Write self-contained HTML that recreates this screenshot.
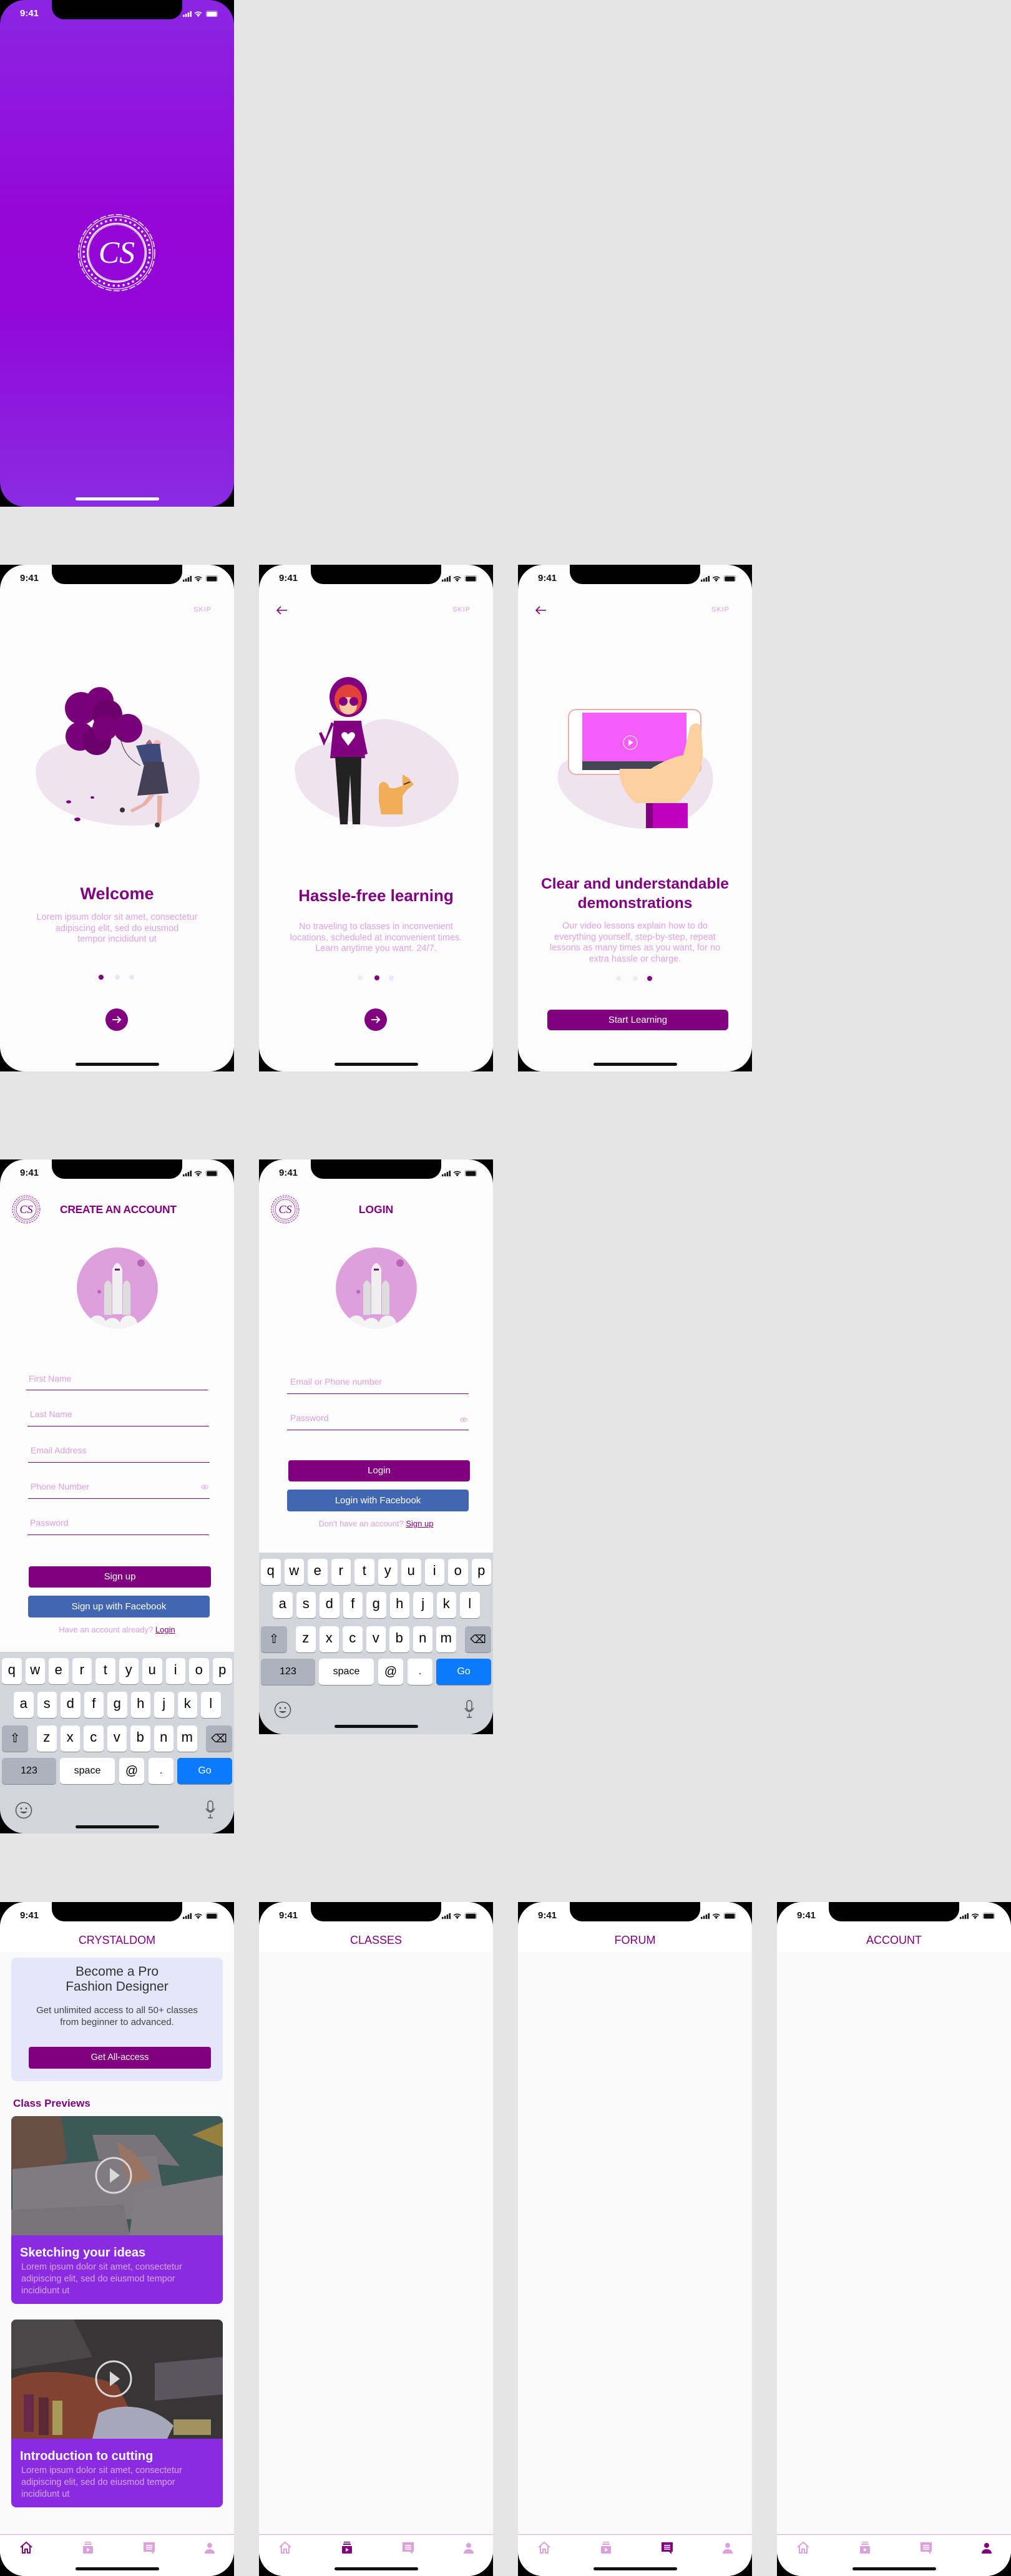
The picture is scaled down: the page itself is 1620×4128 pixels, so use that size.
<!DOCTYPE html>
<html><head><meta charset="utf-8">
<style>
*{margin:0;padding:0;box-sizing:border-box}
body{width:1620px;height:4128px;background:#e5e5e5;position:relative;overflow:hidden;font-family:"Liberation Sans",sans-serif}
.ph{position:absolute;width:375px;background:#000}
.scr{position:absolute;inset:0;border-radius:40px;overflow:hidden;background:#fcfcfc}
.notch{position:absolute;left:83px;top:0;width:209px;height:31px;background:#000;border-radius:0 0 20px 20px}
.time{position:absolute;left:22px;top:13px;width:50px;text-align:center;font-size:15px;font-weight:bold;color:#111}
.sb{position:absolute;left:293px;top:17px;transform:scale(.85);transform-origin:left top}
.abs{position:absolute}
.c{position:absolute;left:0;width:375px;text-align:center}
.hi{position:absolute;left:121px;width:134px;height:5px;border-radius:3px;background:#111}
.obt{font-weight:bold;color:#800080}
.obd{font-size:14.5px;line-height:17.5px;color:#e0a3e3}
.dot{position:absolute;width:8px;height:8px;border-radius:50%;background:#e8e6f8}
.dot.on{background:#800080}
.lbl{position:absolute;font-size:14px;color:#dd9fdd}
.line{position:absolute;height:1px;background:#800080}
.btn{position:absolute;border-radius:4px;color:#fff;font-size:15px;text-align:center}
.kb{position:absolute;left:0;width:375px;background:#d2d5db}
.row{position:absolute;display:flex;gap:6px}
.k{width:31.5px;height:42px;background:#fff;border-radius:5px;box-shadow:0 1px 0 #898a8d;font-size:22px;text-align:center;line-height:38px;color:#000}
.ka{position:absolute;height:42px;border-radius:5px;box-shadow:0 1px 0 #898a8d;text-align:center;line-height:42px;font-size:16px}
.hdr{position:absolute;left:0;top:0;width:375px;height:80px;background:#fff}
.ht{position:absolute;left:0;top:51px;width:375px;text-align:center;font-size:18px;color:#800080}
.tab{position:absolute;left:0;top:1013px;width:375px;height:67px;background:#fff;border-top:1px solid #dda0dd}
.ti{position:absolute;top:9px}
</style></head><body>

<!-- SPLASH -->
<div class="ph" style="left:0;top:0;height:812px">
<div class="scr" style="background:linear-gradient(#8b25e3,#9505d6 45%,#9206d8 60%,#8a2be2)">
<div class="notch"></div>
<div class="time" style="color:#fff">9:41</div>
<svg class="sb" width="66" height="12"><g fill="#fff"><rect x="0" y="8" width="3" height="4"/><rect x="4.5" y="6" width="3" height="6"/><rect x="9" y="3.5" width="3" height="8.5"/><rect x="13.5" y="1" width="3" height="11"/><path d="M29 12l-2.5-3a4 4 0 0 1 5 0zM24.5 7a7 7 0 0 1 9 0l-1.3 1.4a5 5 0 0 0-6.4 0zM22 4.5a10.5 10.5 0 0 1 14 0l-1.3 1.4a8.5 8.5 0 0 0-11.4 0z"/><rect x="45" y="2" width="19" height="9" rx="2"/></g><rect x="43.5" y="0.5" width="22" height="11" rx="3" fill="none" stroke="#fff" opacity=".5"/></svg>
<svg class="abs" style="left:123px;top:341px" width="128" height="128" viewBox="-64 -64 128 128">
<g fill="none" stroke="#fff"><circle r="61" stroke-width="1.5" stroke-dasharray="10 3"/><circle r="58" stroke-width="1.2"/><circle r="53" stroke-width="3.5" stroke-dasharray="0 8" stroke-linecap="round"/><circle r="47" stroke-width="2"/><circle r="45" stroke-width="1"/></g>
<text x="0" y="16" text-anchor="middle" font-family="Liberation Serif,serif" font-style="italic" font-size="50" fill="#fff">CS</text></svg>
<div class="hi" style="top:797px;background:#fff"></div>
</div></div>

<!-- ONBOARDING 1 -->
<div class="ph" style="left:0;top:905px;height:812px"><div class="scr">
<div class="notch"></div><div class="time">9:41</div>
<svg class="sb" width="66" height="12"><g fill="#111"><rect x="0" y="8" width="3" height="4"/><rect x="4.5" y="6" width="3" height="6"/><rect x="9" y="3.5" width="3" height="8.5"/><rect x="13.5" y="1" width="3" height="11"/><path d="M29 12l-2.5-3a4 4 0 0 1 5 0zM24.5 7a7 7 0 0 1 9 0l-1.3 1.4a5 5 0 0 0-6.4 0zM22 4.5a10.5 10.5 0 0 1 14 0l-1.3 1.4a8.5 8.5 0 0 0-11.4 0z"/><rect x="45" y="2" width="19" height="9" rx="2"/></g><rect x="43.5" y="0.5" width="22" height="11" rx="3" fill="none" stroke="#111" opacity=".4"/></svg>
<div class="abs" style="left:310px;top:66px;font-size:11px;color:#dda0dd;letter-spacing:1px">SKIP</div>
<svg class="abs" style="left:0;top:0" width="375" height="440">
<path d="M58 340C52 300 90 290 120 282C160 270 175 245 215 252C270 262 322 300 320 345C318 395 265 420 210 418C150 418 64 395 58 340Z" fill="#efe3f0"/>
<g fill="#7a0079"><circle cx="130" cy="230" r="26"/><circle cx="160" cy="218" r="22"/><circle cx="172" cy="240" r="24" fill="#6b006b"/><circle cx="205" cy="262" r="23"/><circle cx="128" cy="275" r="23"/><circle cx="155" cy="282" r="23" fill="#6b006b"/><circle cx="168" cy="262" r="20"/></g>
<path d="M192 275C198 300 205 310 225 322" stroke="#333" fill="none"/>
<path d="M240 280c-8 5-10 15-6 25l8 4 10-10z" fill="#a06a7a"/><circle cx="252" cy="287" r="6" fill="#f0b8b0"/>
<path d="M218 290l22 -3 16 0 4 30-30 4z" fill="#3f4a7a"/>
<path d="M232 316l30 0 8 50-50 4z" fill="#444055"/>
<path d="M240 368l-12 15-20 10 4 4 22-12 14-16z" fill="#e8b0a8"/><path d="M252 370l0 45 6 0 2-45z" fill="#e8b0a8"/>
<circle cx="252" cy="417" r="4" fill="#333"/><circle cx="196" cy="393" r="4" fill="#333"/>
<ellipse cx="110" cy="380" rx="4" ry="2.5" fill="#800080"/><ellipse cx="148" cy="373" rx="3" ry="2" fill="#800080"/><ellipse cx="124" cy="408" rx="5" ry="3" fill="#800080"/>
</svg>
<div class="c obt" style="top:512px;font-size:27px">Welcome</div>
<div class="c obd" style="top:557px">Lorem ipsum dolor sit amet, consectetur<br>adipiscing elit, sed do eiusmod<br>tempor incididunt ut</div>
<div class="dot on" style="left:158px;top:657px"></div><div class="dot" style="left:184px;top:657px"></div><div class="dot" style="left:207px;top:657px"></div>
<svg class="abs" style="left:169px;top:711px" width="36" height="36"><circle cx="18" cy="18" r="18" fill="#800080"/><path d="M11 18h13M19 13l5 5-5 5" stroke="#fff" stroke-width="2" fill="none"/></svg>
<div class="hi" style="top:798px"></div>
</div></div>

<!-- ONBOARDING 2 -->
<div class="ph" style="left:415px;top:905px;height:812px"><div class="scr">
<div class="notch"></div><div class="time">9:41</div>
<svg class="sb" width="66" height="12"><g fill="#111"><rect x="0" y="8" width="3" height="4"/><rect x="4.5" y="6" width="3" height="6"/><rect x="9" y="3.5" width="3" height="8.5"/><rect x="13.5" y="1" width="3" height="11"/><path d="M29 12l-2.5-3a4 4 0 0 1 5 0zM24.5 7a7 7 0 0 1 9 0l-1.3 1.4a5 5 0 0 0-6.4 0zM22 4.5a10.5 10.5 0 0 1 14 0l-1.3 1.4a8.5 8.5 0 0 0-11.4 0z"/><rect x="45" y="2" width="19" height="9" rx="2"/></g><rect x="43.5" y="0.5" width="22" height="11" rx="3" fill="none" stroke="#111" opacity=".4"/></svg>
<svg class="abs" style="left:28px;top:66px" width="18" height="14"><path d="M17 7H2M7 1L1 7l6 6" stroke="#800080" stroke-width="1.6" fill="none"/></svg>
<div class="abs" style="left:310px;top:66px;font-size:11px;color:#dda0dd;letter-spacing:1px">SKIP</div>
<svg class="abs" style="left:0;top:0" width="375" height="440">
<path d="M58 335C52 300 90 292 120 282C160 270 172 243 210 248C270 256 322 305 320 345C318 395 265 420 210 420C150 420 64 395 58 335Z" fill="#efe3f0"/>
<ellipse cx="143" cy="212" rx="30" ry="32" fill="#800080"/><ellipse cx="143" cy="216" rx="22" ry="24" fill="#e3403a"/>
<circle cx="143" cy="226" r="14" fill="#f6c7a0"/><circle cx="135" cy="219" r="7" fill="#800080"/><circle cx="152" cy="219" r="7" fill="#800080"/>
<path d="M120 250h44l6 60h-56z" fill="#800080"/><path d="M120 255l-16 35-8-20 4-2 6 12 10-28z" fill="#800080"/><path d="M164 255l10 48-7 2-8-40z" fill="#800080"/>
<path d="M134 278c-6-8 4-14 9-6 5-8 15-2 9 6l-9 12z" fill="#fff"/>
<path d="M122 308h42l-2 108h-12l-4-80-4 80h-12z" fill="#222"/>
<path d="M192 358c0-14 14-12 16-2 4 4 12 2 22-2l0-18 10 6 8 10-10 8-8 10 0 30h-34l-4-20z" fill="#f2ad58"/>
<path d="M232 352l10-4" stroke="#333" stroke-width="2"/>
</svg>
<div class="c obt" style="top:515px;font-size:26px">Hassle-free learning</div>
<div class="c obd" style="top:572px">No traveling to classes in inconvenient<br>locations, scheduled at inconvenient times.<br>Learn anytime you want. 24/7.</div>
<div class="dot" style="left:158px;top:658px;background:#eee"></div><div class="dot on" style="left:185px;top:658px"></div><div class="dot" style="left:208px;top:658px"></div>
<svg class="abs" style="left:169px;top:711px" width="36" height="36"><circle cx="18" cy="18" r="18" fill="#800080"/><path d="M11 18h13M19 13l5 5-5 5" stroke="#fff" stroke-width="2" fill="none"/></svg>
<div class="hi" style="top:798px"></div>
</div></div>

<!-- ONBOARDING 3 -->
<div class="ph" style="left:830px;top:905px;height:812px"><div class="scr">
<div class="notch"></div><div class="time">9:41</div>
<svg class="sb" width="66" height="12"><g fill="#111"><rect x="0" y="8" width="3" height="4"/><rect x="4.5" y="6" width="3" height="6"/><rect x="9" y="3.5" width="3" height="8.5"/><rect x="13.5" y="1" width="3" height="11"/><path d="M29 12l-2.5-3a4 4 0 0 1 5 0zM24.5 7a7 7 0 0 1 9 0l-1.3 1.4a5 5 0 0 0-6.4 0zM22 4.5a10.5 10.5 0 0 1 14 0l-1.3 1.4a8.5 8.5 0 0 0-11.4 0z"/><rect x="45" y="2" width="19" height="9" rx="2"/></g><rect x="43.5" y="0.5" width="22" height="11" rx="3" fill="none" stroke="#111" opacity=".4"/></svg>
<svg class="abs" style="left:28px;top:66px" width="18" height="14"><path d="M17 7H2M7 1L1 7l6 6" stroke="#800080" stroke-width="1.6" fill="none"/></svg>
<div class="abs" style="left:310px;top:66px;font-size:11px;color:#dda0dd;letter-spacing:1px">SKIP</div>
<svg class="abs" style="left:0;top:0" width="375" height="440">
<path d="M64 345C60 310 90 305 140 305L290 305C312 310 316 340 310 360C300 395 260 420 210 423C150 425 70 390 64 345Z" fill="#efe3f0"/>
<rect x="81" y="232" width="212" height="104" rx="12" fill="#fff" stroke="#eab0a8" stroke-width="2"/>
<rect x="103" y="237" width="167" height="78" fill="#f55cf9"/><rect x="103" y="315" width="167" height="14" fill="#414853"/>
<circle cx="180" cy="285" r="11" fill="none" stroke="#fff"/><path d="M177 280l8 5-8 5z" fill="#fff"/>
<path d="M163 327c-3 20 10 42 25 55h68c20-20 42-50 40-85l-3-38c-4-8-16-6-18 4l-10 42c-20 4-40 14-52 22z" fill="#fdd0a2"/>
<rect x="205" y="382" width="67" height="40" fill="#c000c0"/><rect x="205" y="382" width="11" height="40" fill="#800080"/>
</svg>
<div class="c obt" style="top:496px;font-size:24.5px;line-height:31px">Clear and understandable<br>demonstrations</div>
<div class="c obd" style="top:571px">Our video lessons explain how to do<br>everything yourself, step-by-step, repeat<br>lessons as many times as you want, for no<br>extra hassle or charge.</div>
<div class="dot" style="left:157px;top:659px;background:#eee"></div><div class="dot" style="left:184px;top:659px;background:#eee"></div><div class="dot on" style="left:207px;top:659px"></div>
<div class="btn" style="left:47px;top:713px;width:290px;height:33px;line-height:33px;background:#800080;border-radius:6px">Start Learning</div>
<div class="hi" style="top:798px"></div>
</div></div>

<!-- SIGNUP -->
<div class="ph" style="left:0;top:1858px;height:1080px"><div class="scr">
<div class="notch"></div><div class="time">9:41</div>
<svg class="sb" width="66" height="12"><g fill="#111"><rect x="0" y="8" width="3" height="4"/><rect x="4.5" y="6" width="3" height="6"/><rect x="9" y="3.5" width="3" height="8.5"/><rect x="13.5" y="1" width="3" height="11"/><path d="M29 12l-2.5-3a4 4 0 0 1 5 0zM24.5 7a7 7 0 0 1 9 0l-1.3 1.4a5 5 0 0 0-6.4 0zM22 4.5a10.5 10.5 0 0 1 14 0l-1.3 1.4a8.5 8.5 0 0 0-11.4 0z"/><rect x="45" y="2" width="19" height="9" rx="2"/></g><rect x="43.5" y="0.5" width="22" height="11" rx="3" fill="none" stroke="#111" opacity=".4"/></svg>
<svg class="abs" style="left:19px;top:57px" width="46" height="46" viewBox="-23 -23 46 46"><g fill="none" stroke="#a020a0"><circle r="22" stroke-width="1" stroke-dasharray="3 1.5"/><circle r="19" stroke-width="1.5" stroke-dasharray="0 3" stroke-linecap="round"/><circle r="16" stroke-width=".8"/></g><text x="0" y="6" text-anchor="middle" font-family="Liberation Serif,serif" font-style="italic" font-size="18" fill="#800080">CS</text></svg>
<div class="abs" style="left:96px;top:70px;font-size:17.5px;font-weight:bold;color:#800080;letter-spacing:-.3px">CREATE AN ACCOUNT</div>
<svg class="abs" style="left:120px;top:138px" width="136" height="136" viewBox="-68 -68 136 136"><defs><clipPath id="cc1"><circle r="65"/></clipPath></defs><g clip-path="url(#cc1)"><circle r="65" fill="#dda0dd"/><circle cx="38" cy="-40" r="6" fill="#b866b8"/><circle cx="-29" cy="6" r="3" fill="#b866b8"/><path d="M-8 -30q8-20 16 0v72h-16z" fill="#efefef"/><path d="M-21 -5q6-14 12 0v48h-12z" fill="#ddd"/><path d="M9 -5q6-14 12 0v48h-12z" fill="#ddd"/><rect x="-4" y="-31" width="8" height="3" fill="#800080"/><circle cx="-32" cy="58" r="14" fill="#f4f4f4"/><circle cx="-8" cy="62" r="14" fill="#f4f4f4"/><circle cx="18" cy="58" r="14" fill="#f4f4f4"/><circle cx="40" cy="66" r="12" fill="#f4f4f4"/></g></svg>
<div class="lbl" style="left:46px;top:343px">First Name</div><div class="line" style="left:42px;top:369px;width:291px"></div>
<div class="lbl" style="left:48px;top:400px">Last Name</div><div class="line" style="left:44px;top:427px;width:291px"></div>
<div class="lbl" style="left:49px;top:458px">Email Address</div><div class="line" style="left:45px;top:485px;width:291px"></div>
<div class="lbl" style="left:49px;top:516px">Phone Number</div><div class="line" style="left:45px;top:543px;width:291px"></div>
<svg class="abs" style="left:322px;top:521px" width="12" height="8"><ellipse cx="6" cy="4" rx="5" ry="3" fill="none" stroke="#dda0dd"/><circle cx="6" cy="4" r="1.5" fill="#dda0dd"/></svg>
<div class="lbl" style="left:48px;top:574px">Password</div><div class="line" style="left:44px;top:601px;width:291px"></div>
<div class="btn" style="left:46px;top:652px;width:292px;height:34px;line-height:34px;background:#800080">Sign up</div>
<div class="btn" style="left:45px;top:699px;width:291px;height:35px;line-height:35px;background:#4267b2">Sign up with Facebook</div>
<div class="c" style="top:746px;font-size:13px;color:#dd9fdd">Have an account already? <u style="color:#800080">Login</u></div>
<div class="kb" style="top:789px;height:291px">
<div class="row" style="left:3px;top:10px"><div class="k">q</div><div class="k">w</div><div class="k">e</div><div class="k">r</div><div class="k">t</div><div class="k">y</div><div class="k">u</div><div class="k">i</div><div class="k">o</div><div class="k">p</div></div>
<div class="row" style="left:22px;top:64px"><div class="k">a</div><div class="k">s</div><div class="k">d</div><div class="k">f</div><div class="k">g</div><div class="k">h</div><div class="k">j</div><div class="k">k</div><div class="k">l</div></div>
<div class="ka" style="left:3px;top:118px;width:42px;background:#adb3bc;font-size:20px">⇧</div>
<div class="row" style="left:59px;top:118px"><div class="k">z</div><div class="k">x</div><div class="k">c</div><div class="k">v</div><div class="k">b</div><div class="k">n</div><div class="k">m</div></div>
<div class="ka" style="left:330px;top:118px;width:42px;background:#adb3bc;font-size:18px">⌫</div>
<div class="ka" style="left:3px;top:170px;width:87px;background:#adb3bc">123</div>
<div class="ka" style="left:96px;top:170px;width:88px;background:#fff">space</div>
<div class="ka" style="left:191px;top:170px;width:40px;background:#fff;font-size:20px">@</div>
<div class="ka" style="left:238px;top:170px;width:40px;background:#fff">.</div>
<div class="ka" style="left:284px;top:170px;width:88px;background:#0a7aff;color:#fff">Go</div>
<svg class="abs" style="left:24px;top:240px" width="28" height="28"><circle cx="14" cy="14" r="12.5" fill="none" stroke="#555" stroke-width="1.5"/><circle cx="10" cy="11" r="1.5" fill="#555"/><circle cx="18" cy="11" r="1.5" fill="#555"/><path d="M8 16q6 6 12 0z" fill="#555"/></svg>
<svg class="abs" style="left:328px;top:238px" width="18" height="30"><rect x="5" y="1" width="8" height="16" rx="4" fill="none" stroke="#555" stroke-width="1.5"/><path d="M2 13q7 12 14 0M9 22v6M5 28h8" stroke="#555" stroke-width="1.5" fill="none"/></svg>
</div>
<div class="hi" style="top:1067px"></div>
</div></div>

<!-- LOGIN -->
<div class="ph" style="left:415px;top:1858px;height:921px"><div class="scr">
<div class="notch"></div><div class="time">9:41</div>
<svg class="sb" width="66" height="12"><g fill="#111"><rect x="0" y="8" width="3" height="4"/><rect x="4.5" y="6" width="3" height="6"/><rect x="9" y="3.5" width="3" height="8.5"/><rect x="13.5" y="1" width="3" height="11"/><path d="M29 12l-2.5-3a4 4 0 0 1 5 0zM24.5 7a7 7 0 0 1 9 0l-1.3 1.4a5 5 0 0 0-6.4 0zM22 4.5a10.5 10.5 0 0 1 14 0l-1.3 1.4a8.5 8.5 0 0 0-11.4 0z"/><rect x="45" y="2" width="19" height="9" rx="2"/></g><rect x="43.5" y="0.5" width="22" height="11" rx="3" fill="none" stroke="#111" opacity=".4"/></svg>
<svg class="abs" style="left:19px;top:57px" width="46" height="46" viewBox="-23 -23 46 46"><g fill="none" stroke="#a020a0"><circle r="22" stroke-width="1" stroke-dasharray="3 1.5"/><circle r="19" stroke-width="1.5" stroke-dasharray="0 3" stroke-linecap="round"/><circle r="16" stroke-width=".8"/></g><text x="0" y="6" text-anchor="middle" font-family="Liberation Serif,serif" font-style="italic" font-size="18" fill="#800080">CS</text></svg>
<div class="c" style="top:70px;font-size:17.5px;font-weight:bold;color:#800080">LOGIN</div>
<svg class="abs" style="left:120px;top:138px" width="136" height="136" viewBox="-68 -68 136 136"><defs><clipPath id="cc2"><circle r="65"/></clipPath></defs><g clip-path="url(#cc2)"><circle r="65" fill="#dda0dd"/><circle cx="38" cy="-40" r="6" fill="#b866b8"/><circle cx="-29" cy="6" r="3" fill="#b866b8"/><path d="M-8 -30q8-20 16 0v72h-16z" fill="#efefef"/><path d="M-21 -5q6-14 12 0v48h-12z" fill="#ddd"/><path d="M9 -5q6-14 12 0v48h-12z" fill="#ddd"/><rect x="-4" y="-31" width="8" height="3" fill="#800080"/><circle cx="-32" cy="58" r="14" fill="#f4f4f4"/><circle cx="-8" cy="62" r="14" fill="#f4f4f4"/><circle cx="18" cy="58" r="14" fill="#f4f4f4"/><circle cx="40" cy="66" r="12" fill="#f4f4f4"/></g></svg>
<div class="lbl" style="left:50px;top:348px">Email or Phone number</div><div class="line" style="left:45px;top:375px;width:291px"></div>
<div class="lbl" style="left:50px;top:406px">Password</div><div class="line" style="left:45px;top:433px;width:291px"></div>
<svg class="abs" style="left:322px;top:413px" width="12" height="8"><ellipse cx="6" cy="4" rx="5" ry="3" fill="none" stroke="#dda0dd"/><circle cx="6" cy="4" r="1.5" fill="#dda0dd"/></svg>
<div class="btn" style="left:47px;top:482px;width:291px;height:34px;line-height:34px;background:#800080">Login</div>
<div class="btn" style="left:45px;top:529px;width:291px;height:35px;line-height:35px;background:#4267b2">Login with Facebook</div>
<div class="c" style="top:576px;font-size:13px;color:#dd9fdd">Don't have an account? <u style="color:#800080">Sign up</u></div>
<div class="kb" style="top:630px;height:291px">
<div class="row" style="left:3px;top:10px"><div class="k">q</div><div class="k">w</div><div class="k">e</div><div class="k">r</div><div class="k">t</div><div class="k">y</div><div class="k">u</div><div class="k">i</div><div class="k">o</div><div class="k">p</div></div>
<div class="row" style="left:22px;top:63px"><div class="k">a</div><div class="k">s</div><div class="k">d</div><div class="k">f</div><div class="k">g</div><div class="k">h</div><div class="k">j</div><div class="k">k</div><div class="k">l</div></div>
<div class="ka" style="left:3px;top:118px;width:42px;background:#adb3bc;font-size:20px">⇧</div>
<div class="row" style="left:59px;top:118px"><div class="k">z</div><div class="k">x</div><div class="k">c</div><div class="k">v</div><div class="k">b</div><div class="k">n</div><div class="k">m</div></div>
<div class="ka" style="left:330px;top:118px;width:42px;background:#adb3bc;font-size:18px">⌫</div>
<div class="ka" style="left:3px;top:170px;width:87px;background:#adb3bc">123</div>
<div class="ka" style="left:96px;top:170px;width:88px;background:#fff">space</div>
<div class="ka" style="left:191px;top:170px;width:40px;background:#fff;font-size:20px">@</div>
<div class="ka" style="left:238px;top:170px;width:40px;background:#fff">.</div>
<div class="ka" style="left:284px;top:170px;width:88px;background:#0a7aff;color:#fff">Go</div>
<svg class="abs" style="left:24px;top:238px" width="28" height="28"><circle cx="14" cy="14" r="12.5" fill="none" stroke="#555" stroke-width="1.5"/><circle cx="10" cy="11" r="1.5" fill="#555"/><circle cx="18" cy="11" r="1.5" fill="#555"/><path d="M8 16q6 6 12 0z" fill="#555"/></svg>
<svg class="abs" style="left:328px;top:236px" width="18" height="30"><rect x="5" y="1" width="8" height="16" rx="4" fill="none" stroke="#555" stroke-width="1.5"/><path d="M2 13q7 12 14 0M9 22v6M5 28h8" stroke="#555" stroke-width="1.5" fill="none"/></svg>
</div>
<div class="hi" style="top:906px"></div>
</div></div>

<!-- HOME -->
<div class="ph" style="left:0;top:3048px;height:1080px"><div class="scr" style="background:#fafafa">
<div class="hdr"></div>
<div class="notch"></div><div class="time">9:41</div>
<svg class="sb" width="66" height="12"><g fill="#111"><rect x="0" y="8" width="3" height="4"/><rect x="4.5" y="6" width="3" height="6"/><rect x="9" y="3.5" width="3" height="8.5"/><rect x="13.5" y="1" width="3" height="11"/><path d="M29 12l-2.5-3a4 4 0 0 1 5 0zM24.5 7a7 7 0 0 1 9 0l-1.3 1.4a5 5 0 0 0-6.4 0zM22 4.5a10.5 10.5 0 0 1 14 0l-1.3 1.4a8.5 8.5 0 0 0-11.4 0z"/><rect x="45" y="2" width="19" height="9" rx="2"/></g><rect x="43.5" y="0.5" width="22" height="11" rx="3" fill="none" stroke="#111" opacity=".4"/></svg>
<div class="ht">CRYSTALDOM</div>
<div class="abs" style="left:18px;top:89px;width:339px;height:198px;background:#e6e6fa;border-radius:8px"></div>
<div class="c" style="top:100px;font-size:21px;line-height:24px;color:#333">Become a Pro<br>Fashion Designer</div>
<div class="c" style="top:165px;font-size:15px;line-height:18.5px;color:#444">Get unlimited access to all 50+ classes<br>from beginner to advanced.</div>
<div class="btn" style="left:46px;top:232px;width:292px;height:35px;line-height:35px;background:#800080;font-size:14.5px">Get All-access</div>
<div class="abs" style="left:21px;top:313px;font-size:17px;font-weight:bold;color:#800080">Class Previews</div>
<div class="abs" style="left:18px;top:343px;width:339px;height:301px;border-radius:8px;overflow:hidden;background:#8a2be2">
<svg width="339" height="191" style="display:block"><rect width="339" height="191" fill="#3f6664"/><path d="M0 0h80l10 70-60 30-30-5z" fill="#7a5a4e"/><path d="M130 30l100 0 40 50-130-10z" fill="#8f8a90"/><path d="M2 85l230-22 20 100-250 8z" fill="#99939a"/><path d="M200 120l139-25v96h-150z" fill="#9c969d"/><path d="M0 150l180-8 10 49h-190z" fill="#8e8990"/><path d="M168 40l30 20 30 40-40 10z" fill="#b88a74"/><path d="M290 30l49-20v40z" fill="#b89a40"/><rect width="339" height="191" fill="#333" opacity=".25"/><circle cx="164" cy="95" r="28" fill="none" stroke="#d8d8d8" stroke-width="3"/><path d="M158 83l16 12-16 12z" fill="#d8d8d8"/></svg>
<div class="abs" style="left:14px;top:208px;font-size:20px;font-weight:bold;color:#fff">Sketching your ideas</div>
<div class="abs" style="left:16px;top:233px;font-size:14.5px;line-height:19px;color:#d5a6f2">Lorem ipsum dolor sit amet, consectetur<br>adipiscing elit, sed do eiusmod tempor<br>incididunt ut</div>
</div>
<div class="abs" style="left:18px;top:669px;width:339px;height:301px;border-radius:8px;overflow:hidden;background:#8a2be2">
<svg width="339" height="191" style="display:block"><rect width="339" height="191" fill="#3e3a3c"/><path d="M0 0h100l30 60-130 20z" fill="#555052"/><path d="M0 95c40-20 120-10 170 10l30 60-40 26h-160z" fill="#9a4a34"/><path d="M230 70l109-10v60l-109 10z" fill="#6a6270"/><path d="M140 150c40-20 90-10 120 20l-10 21h-120z" fill="#c8c8e0"/><rect x="20" y="120" width="16" height="60" fill="#7a2a50"/><rect x="44" y="125" width="16" height="60" fill="#6a2a3a"/><rect x="66" y="130" width="16" height="55" fill="#c8b868"/><rect x="260" y="160" width="60" height="25" fill="#c0b070"/><rect width="339" height="191" fill="#222" opacity=".2"/><circle cx="164" cy="95" r="28" fill="none" stroke="#d8d8d8" stroke-width="3"/><path d="M158 83l16 12-16 12z" fill="#d8d8d8"/></svg>
<div class="abs" style="left:14px;top:208px;font-size:20px;font-weight:bold;color:#fff">Introduction to cutting</div>
<div class="abs" style="left:16px;top:233px;font-size:14.5px;line-height:19px;color:#d5a6f2">Lorem ipsum dolor sit amet, consectetur<br>adipiscing elit, sed do eiusmod tempor<br>incididunt ut</div>
</div>
<div class="tab">
<svg class="ti" style="left:30px" width="24" height="24"><path d="M3 11L12 3l9 8M6 9v11h4v-6h4v6h4V9" stroke="#800080" stroke-width="2" fill="none"/></svg>
<svg class="ti" style="left:129px" width="24" height="24"><rect x="7" y="2" width="10" height="1.5" fill="#dda0dd"/><rect x="6" y="5" width="12" height="2" fill="#dda0dd"/><rect x="4" y="9" width="16" height="12" rx="1.5" fill="#dda0dd"/><path d="M10 12l5 3-5 3z" fill="#fff"/></svg>
<svg class="ti" style="left:227px" width="24" height="24"><path d="M3 3h18v15h-2v4l-4-4H3z" fill="#dda0dd"/><path d="M7 8h10M7 11h10M7 14h10" stroke="#fff" stroke-width="1.4"/></svg>
<svg class="ti" style="left:324px" width="24" height="24"><circle cx="12" cy="8" r="4" fill="#dda0dd"/><path d="M4 21c0-5 4-7 8-7s8 2 8 7z" fill="#dda0dd"/></svg>
</div>
<div class="hi" style="top:1066px"></div>
</div></div>

<!-- CLASSES -->
<div class="ph" style="left:415px;top:3048px;height:1080px"><div class="scr" style="background:#fafafa">
<div class="hdr"></div><div class="notch"></div><div class="time">9:41</div>
<svg class="sb" width="66" height="12"><g fill="#111"><rect x="0" y="8" width="3" height="4"/><rect x="4.5" y="6" width="3" height="6"/><rect x="9" y="3.5" width="3" height="8.5"/><rect x="13.5" y="1" width="3" height="11"/><path d="M29 12l-2.5-3a4 4 0 0 1 5 0zM24.5 7a7 7 0 0 1 9 0l-1.3 1.4a5 5 0 0 0-6.4 0zM22 4.5a10.5 10.5 0 0 1 14 0l-1.3 1.4a8.5 8.5 0 0 0-11.4 0z"/><rect x="45" y="2" width="19" height="9" rx="2"/></g><rect x="43.5" y="0.5" width="22" height="11" rx="3" fill="none" stroke="#111" opacity=".4"/></svg>
<div class="ht">CLASSES</div>
<div class="tab">
<svg class="ti" style="left:30px" width="24" height="24"><path d="M3 11L12 3l9 8M6 9v11h4v-6h4v6h4V9" stroke="#dda0dd" stroke-width="2" fill="none"/></svg>
<svg class="ti" style="left:129px" width="24" height="24"><rect x="7" y="2" width="10" height="1.5" fill="#800080"/><rect x="6" y="5" width="12" height="2" fill="#800080"/><rect x="4" y="9" width="16" height="12" rx="1.5" fill="#800080"/><path d="M10 12l5 3-5 3z" fill="#fff"/></svg>
<svg class="ti" style="left:227px" width="24" height="24"><path d="M3 3h18v15h-2v4l-4-4H3z" fill="#dda0dd"/><path d="M7 8h10M7 11h10M7 14h10" stroke="#fff" stroke-width="1.4"/></svg>
<svg class="ti" style="left:324px" width="24" height="24"><circle cx="12" cy="8" r="4" fill="#dda0dd"/><path d="M4 21c0-5 4-7 8-7s8 2 8 7z" fill="#dda0dd"/></svg>
</div>
<div class="hi" style="top:1066px"></div>
</div></div>

<!-- FORUM -->
<div class="ph" style="left:830px;top:3048px;height:1080px"><div class="scr" style="background:#fafafa">
<div class="hdr"></div><div class="notch"></div><div class="time">9:41</div>
<svg class="sb" width="66" height="12"><g fill="#111"><rect x="0" y="8" width="3" height="4"/><rect x="4.5" y="6" width="3" height="6"/><rect x="9" y="3.5" width="3" height="8.5"/><rect x="13.5" y="1" width="3" height="11"/><path d="M29 12l-2.5-3a4 4 0 0 1 5 0zM24.5 7a7 7 0 0 1 9 0l-1.3 1.4a5 5 0 0 0-6.4 0zM22 4.5a10.5 10.5 0 0 1 14 0l-1.3 1.4a8.5 8.5 0 0 0-11.4 0z"/><rect x="45" y="2" width="19" height="9" rx="2"/></g><rect x="43.5" y="0.5" width="22" height="11" rx="3" fill="none" stroke="#111" opacity=".4"/></svg>
<div class="ht">FORUM</div>
<div class="tab">
<svg class="ti" style="left:30px" width="24" height="24"><path d="M3 11L12 3l9 8M6 9v11h4v-6h4v6h4V9" stroke="#dda0dd" stroke-width="2" fill="none"/></svg>
<svg class="ti" style="left:129px" width="24" height="24"><rect x="7" y="2" width="10" height="1.5" fill="#dda0dd"/><rect x="6" y="5" width="12" height="2" fill="#dda0dd"/><rect x="4" y="9" width="16" height="12" rx="1.5" fill="#dda0dd"/><path d="M10 12l5 3-5 3z" fill="#fff"/></svg>
<svg class="ti" style="left:227px" width="24" height="24"><path d="M3 3h18v15h-2v4l-4-4H3z" fill="#800080"/><path d="M7 8h10M7 11h10M7 14h10" stroke="#fff" stroke-width="1.4"/></svg>
<svg class="ti" style="left:324px" width="24" height="24"><circle cx="12" cy="8" r="4" fill="#dda0dd"/><path d="M4 21c0-5 4-7 8-7s8 2 8 7z" fill="#dda0dd"/></svg>
</div>
<div class="hi" style="top:1066px"></div>
</div></div>

<!-- ACCOUNT -->
<div class="ph" style="left:1245px;top:3048px;height:1080px"><div class="scr" style="background:#fafafa">
<div class="hdr"></div><div class="notch"></div><div class="time">9:41</div>
<svg class="sb" width="66" height="12"><g fill="#111"><rect x="0" y="8" width="3" height="4"/><rect x="4.5" y="6" width="3" height="6"/><rect x="9" y="3.5" width="3" height="8.5"/><rect x="13.5" y="1" width="3" height="11"/><path d="M29 12l-2.5-3a4 4 0 0 1 5 0zM24.5 7a7 7 0 0 1 9 0l-1.3 1.4a5 5 0 0 0-6.4 0zM22 4.5a10.5 10.5 0 0 1 14 0l-1.3 1.4a8.5 8.5 0 0 0-11.4 0z"/><rect x="45" y="2" width="19" height="9" rx="2"/></g><rect x="43.5" y="0.5" width="22" height="11" rx="3" fill="none" stroke="#111" opacity=".4"/></svg>
<div class="ht">ACCOUNT</div>
<div class="tab">
<svg class="ti" style="left:30px" width="24" height="24"><path d="M3 11L12 3l9 8M6 9v11h4v-6h4v6h4V9" stroke="#dda0dd" stroke-width="2" fill="none"/></svg>
<svg class="ti" style="left:129px" width="24" height="24"><rect x="7" y="2" width="10" height="1.5" fill="#dda0dd"/><rect x="6" y="5" width="12" height="2" fill="#dda0dd"/><rect x="4" y="9" width="16" height="12" rx="1.5" fill="#dda0dd"/><path d="M10 12l5 3-5 3z" fill="#fff"/></svg>
<svg class="ti" style="left:227px" width="24" height="24"><path d="M3 3h18v15h-2v4l-4-4H3z" fill="#dda0dd"/><path d="M7 8h10M7 11h10M7 14h10" stroke="#fff" stroke-width="1.4"/></svg>
<svg class="ti" style="left:324px" width="24" height="24"><circle cx="12" cy="8" r="4" fill="#800080"/><path d="M4 21c0-5 4-7 8-7s8 2 8 7z" fill="#800080"/></svg>
</div>
<div class="hi" style="top:1066px"></div>
</div></div>

</body></html>
